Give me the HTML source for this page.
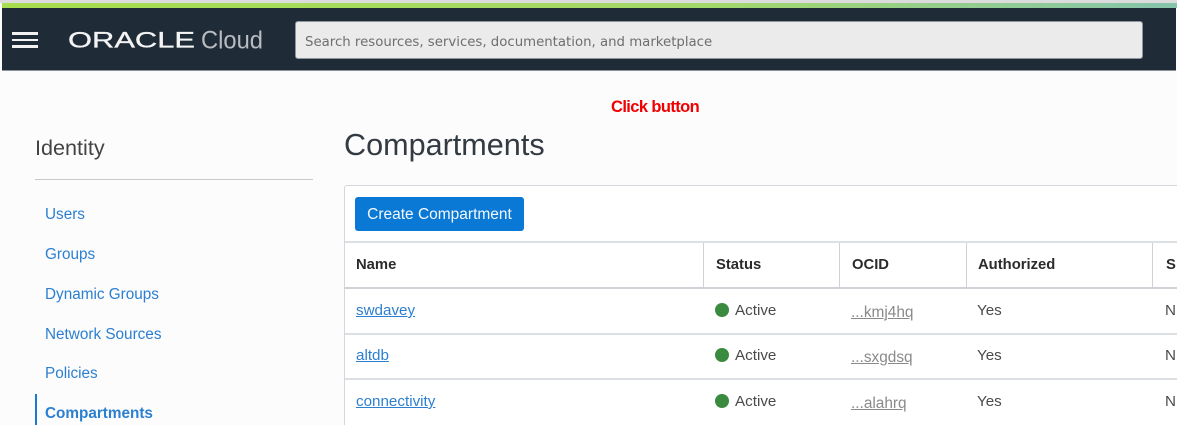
<!DOCTYPE html>
<html><head><meta charset="utf-8"><style>
html,body{margin:0;padding:0;width:1177px;height:425px;overflow:hidden}
#w{width:1177px;height:425px;overflow:hidden;position:relative;background:#fcfcfd;font-family:"Liberation Sans",sans-serif;color:#3a3a3a;filter:blur(.3px)}
.a{position:absolute;white-space:nowrap}
.l{color:#2c7fd0;font-size:15.3px;line-height:18px;left:45px}
.th{font-weight:bold;font-size:14.8px;line-height:18px;top:256px;color:#2b2b2b}
.td{font-size:15.2px;line-height:18px;color:#4a4a4a}
.u{color:#2c7fd0;text-decoration:underline;left:356px}
.o{color:#8a8a8a;text-decoration:underline;left:851px;font-size:15.4px}
.h{position:absolute;left:345px;width:832px;height:2px;background:#dcdfe3}
.v{position:absolute;top:243px;height:45px;width:1px;background:#ced2d7}
.d{position:absolute;left:715px;width:14px;height:14px;border-radius:50%;background:#3a8a3f}
</style></head><body><div id="w">
<div class="a" style="left:0;top:0;width:1177px;height:3px;background:#dcdcdc"></div>
<div class="a" style="left:2px;top:3px;width:1175px;height:5px;background:linear-gradient(90deg,#a6de4e,#a3d86a 60%,#86c4ac)"></div>
<div class="a" style="left:2px;top:8px;width:1174px;height:62px;background:#1f2c38;border-bottom:1px solid #8c929a"></div>
<div class="a" style="left:12px;top:32px;width:26px;height:3px;background:#f2f2f2"></div>
<div class="a" style="left:12px;top:39px;width:26px;height:2px;background:#f2f2f2"></div>
<div class="a" style="left:12px;top:45px;width:26px;height:3px;background:#f2f2f2"></div>
<svg class="a" style="left:60px;top:20px" width="220" height="40">
<text x="8" y="27.5" textLength="127" lengthAdjust="spacingAndGlyphs" font-family="Liberation Sans" font-size="22" fill="#f4f4f4" stroke="#f4f4f4" stroke-width=".3">ORACLE</text>
<text x="141" y="28.5" textLength="62" lengthAdjust="spacingAndGlyphs" font-family="Liberation Sans" font-size="25" fill="#b9bcc0">Cloud</text>
</svg>
<div class="a" style="left:295px;top:21px;width:848px;height:38px;box-sizing:border-box;background:#ebebeb;border:1px solid #8f959c;border-radius:3px;font-family:'DejaVu Sans',sans-serif;font-size:13.3px;line-height:38px;padding-left:9px;color:#6e6e6e"><span style="position:relative;top:2px">Search resources, services, documentation, and marketplace</span></div>
<div class="a" style="left:611px;top:98px;font-weight:bold;font-size:16.5px;line-height:18px;color:#f00000;letter-spacing:-.6px">Click button</div>
<div class="a" style="left:35px;top:135px;font-size:21.6px;line-height:26px;color:#444">Identity</div>
<div class="a" style="left:35px;top:179px;width:278px;height:1px;background:#c8c8c8"></div>
<div class="a l" style="top:206px">Users</div>
<div class="a l" style="top:246px">Groups</div>
<div class="a l" style="top:286px">Dynamic Groups</div>
<div class="a l" style="top:326px">Network Sources</div>
<div class="a l" style="top:365px">Policies</div>
<div class="a" style="left:35px;top:394px;width:2px;height:31px;background:#1a7ad4"></div>
<div class="a l" style="top:405px;font-weight:bold">Compartments</div>
<div class="a" style="left:344px;top:126px;font-size:30.6px;line-height:38px;color:#333a42">Compartments</div>
<div class="a" style="left:344px;top:185px;width:840px;height:250px;box-sizing:border-box;background:#fff;border:1px solid #d3d6da;border-radius:3px"></div>
<div class="a" style="left:355px;top:197px;width:169px;height:34px;background:#0a79d6;border-radius:3px;color:#f4f8fc;font-size:15.5px;line-height:35px;text-align:center">Create Compartment</div>
<div class="h" style="top:241px"></div>
<div class="h" style="top:287px;background:#cfd3d8"></div>
<div class="h" style="top:333px"></div>
<div class="h" style="top:378px"></div>
<div class="v" style="left:703px"></div>
<div class="v" style="left:839px"></div>
<div class="v" style="left:966px"></div>
<div class="v" style="left:1152px"></div>
<div class="a th" style="left:356px">Name</div>
<div class="a th" style="left:716px">Status</div>
<div class="a th" style="left:852px">OCID</div>
<div class="a th" style="left:978px">Authorized</div>
<div class="a th" style="left:1166px">S</div>
<div class="a td u" style="top:302px">swdavey</div>
<div class="a td u" style="top:347px">altdb</div>
<div class="a td u" style="top:393px">connectivity</div>
<div class="d" style="top:303px"></div><div class="d" style="top:348px"></div><div class="d" style="top:394px"></div>
<div class="a td" style="left:735px;top:302px">Active</div>
<div class="a td" style="left:735px;top:347px">Active</div>
<div class="a td" style="left:735px;top:393px">Active</div>
<div class="a td o" style="top:304px">...kmj4hq</div>
<div class="a td o" style="top:349px">...sxgdsq</div>
<div class="a td o" style="top:395px">...alahrq</div>
<div class="a td" style="left:977px;top:302px">Yes</div>
<div class="a td" style="left:977px;top:347px">Yes</div>
<div class="a td" style="left:977px;top:393px">Yes</div>
<div class="a td" style="left:1165px;top:302px">N</div>
<div class="a td" style="left:1165px;top:347px">N</div>
<div class="a td" style="left:1165px;top:393px">N</div>
</div></body></html>
